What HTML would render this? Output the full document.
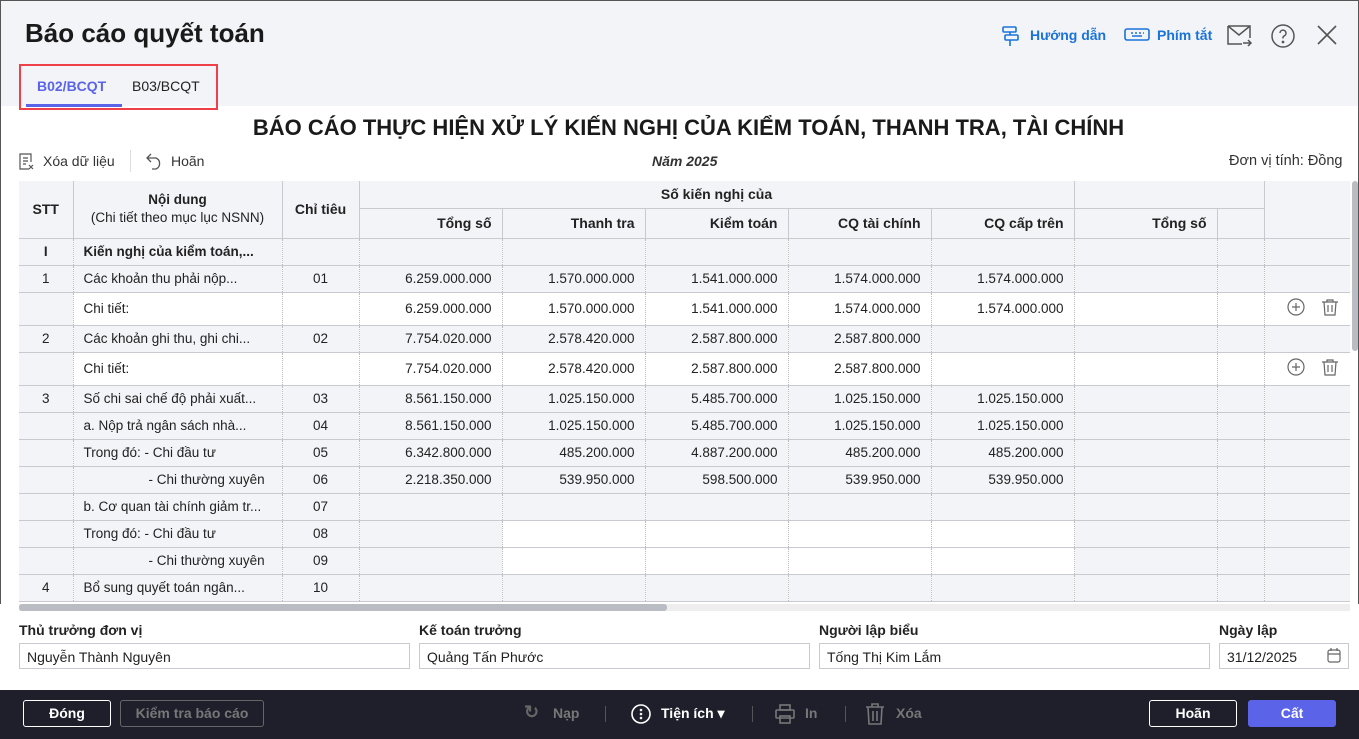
<!DOCTYPE html>
<html><head><meta charset="utf-8"><style>
*{box-sizing:border-box;margin:0;padding:0}
body{width:1359px;height:739px;overflow:hidden;font-family:"Liberation Sans",sans-serif;color:#222;background:#fff;position:relative}
.frame{position:absolute;inset:0;border:1px solid #555;border-bottom:none}
.top{position:absolute;left:1px;top:1px;right:1px;height:105px;background:#f3f4f8}
h1{position:absolute;left:25px;top:18px;font-size:26px;font-weight:bold;color:#1a1a1a}
.tabs{position:absolute;left:19px;top:64px;width:199px;height:46px;border:2px solid #ef4049}
.tab{position:absolute;top:12px;font-size:14px;font-weight:bold}
.tab1{left:16px;color:#5b63e8}.tab2{left:111px;color:#222;font-weight:normal}
.tabline{position:absolute;left:5px;top:38px;width:96px;height:3px;background:#5b63e8}
.tl{position:absolute;top:27px;font-size:14px;color:#1a73d9;font-weight:bold}
.rtitle{position:absolute;left:0;width:1377px;top:115px;text-align:center;font-size:22px;font-weight:bold;color:#1a1a1a}
.tool{position:absolute;top:153px;font-size:14px;color:#333}
table{position:absolute;left:19px;top:181px;border-collapse:collapse;table-layout:fixed;font-size:13.5px}
td,th{border-left:1px dotted #bbb;height:27px;padding:0 10px;white-space:nowrap;overflow:hidden;background:#f3f4f8;border-bottom:1px solid #c8cad0}
th{border-left:1px solid #c8cad0;font-weight:bold;font-size:14px}
td.r,th.r{text-align:right}td.c,th.c{text-align:center}
tr.w td{background:#fff;height:33px}
tr.w td:first-child{background:#f3f4f8}
td.wh{background:#fff}
.hs{position:absolute;left:19px;top:604px;width:1331px;height:7px;background:#eee}
.hs div{width:648px;height:7px;background:#b9bcc2;border-radius:3px}
.vs{position:absolute;left:1352px;top:181px;width:6px;height:170px;background:#b9bcc2;border-radius:3px}
.lbl{position:absolute;top:622px;font-size:14px;font-weight:bold}
.inp{position:absolute;top:643px;height:26px;border:1px solid #c8cad0;font-size:14px;padding:5px 7px}
.foot{position:absolute;left:0;top:690px;width:1359px;height:49px;background:#1e1f2b}
.btn{position:absolute;top:10px;height:27px;border:1px solid #fff;border-radius:3px;color:#fff;font-size:14px;font-weight:bold;text-align:center;line-height:25px}
.fi{position:absolute;top:15px;font-size:14px;font-weight:bold}
</style></head><body>
<div class="frame"></div>
<div class="top"></div>
<h1>Báo cáo quyết toán</h1>
<div class="tabs"><span class="tab tab1">B02/BCQT</span><span class="tab tab2">B03/BCQT</span><div class="tabline"></div></div>
<svg style="position:absolute;left:1001px;top:25px" width="20" height="22" viewBox="0 0 20 22" fill="none" stroke="#1a73d9" stroke-width="1.6"><rect x="2" y="2" width="13" height="5" rx="1"/><rect x="4" y="10" width="13" height="5" rx="1"/><path d="M9 7v3M9 15v6"/></svg>
<span class="tl" style="left:1030px">Hướng dẫn</span>
<svg style="position:absolute;left:1124px;top:28px" width="26" height="14" viewBox="0 0 26 14" fill="none" stroke="#1a73d9" stroke-width="1.6"><rect x="1" y="1" width="24" height="11" rx="2"/><path d="M7 5h2M11 5h2M15 5h2M19 5h1M8 8h10" /></svg>
<span class="tl" style="left:1157px">Phím tắt</span>
<svg style="position:absolute;left:1227px;top:24px" width="26" height="24" viewBox="0 0 26 24" fill="none" stroke="#555" stroke-width="1.5"><path d="M1 2h22v12M1 2v18h14M1 2l11 9 11-9M16 19h8M21 16l3 3-3 3"/></svg>
<svg style="position:absolute;left:1271px;top:24px" width="24" height="24" viewBox="0 0 24 24" fill="none" stroke="#555" stroke-width="1.5"><circle cx="12" cy="12" r="11"/><path d="M9 9a3 3 0 1 1 4 3c-1 .5-1 1-1 2.5"/><circle cx="12" cy="18" r=".6" fill="#555"/></svg>
<svg style="position:absolute;left:1317px;top:25px" width="20" height="20" viewBox="0 0 20 20" stroke="#555" stroke-width="1.6"><path d="M1 1l18 18M19 1L1 19"/></svg>
<div class="rtitle">BÁO CÁO THỰC HIỆN XỬ LÝ KIẾN NGHỊ CỦA KIỂM TOÁN, THANH TRA, TÀI CHÍNH</div>
<svg style="position:absolute;left:19px;top:153px" width="16" height="18" viewBox="0 0 16 18" fill="none" stroke="#555" stroke-width="1.2"><path d="M10 16H1V1h11v8M4 5h5M4 8h5M4 11h3M10 12l4 4M14 12l-4 4"/></svg>
<span class="tool" style="left:43px">Xóa dữ liệu</span>
<div style="position:absolute;left:130px;top:150px;width:1px;height:22px;background:#ddd"></div>
<svg style="position:absolute;left:146px;top:152px" width="18" height="18" viewBox="0 0 18 18" fill="none" stroke="#555" stroke-width="1.3"><path d="M5 2L1 6l4 4M1 6h9a6 6 0 0 1 0 11H6"/></svg>
<span class="tool" style="left:171px">Hoãn</span>
<span class="tool" style="left:652px;font-style:italic;font-weight:bold">Năm 2025</span>
<span class="tool" style="left:1229px;font-size:14.5px">Đơn vị tính: Đồng</span>
<table>
<colgroup><col style="width:54px"><col style="width:209px"><col style="width:77px"><col style="width:143px"><col style="width:143px"><col style="width:143px"><col style="width:143px"><col style="width:143px"><col style="width:143px"><col style="width:47px"><col style="width:86px"></colgroup>
<tr><th rowspan="2" class="c" style="border-left:none">STT</th><th rowspan="2" class="c" style="font-weight:normal;font-size:13.5px;line-height:18px"><b>Nội dung</b><br>(Chi tiết theo mục lục NSNN)</th><th rowspan="2" class="c">Chỉ tiêu</th><th colspan="5" class="c" style="height:26px">Số kiến nghị của</th><th colspan="2"></th><th rowspan="2"></th></tr>
<tr><th class="r" style="height:30px">Tổng số</th><th class="r">Thanh tra</th><th class="r">Kiểm toán</th><th class="r">CQ tài chính</th><th class="r">CQ cấp trên</th><th class="r">Tổng số</th><th></th></tr>
<tr><td class="c" style="border-left:none"><b>I</b></td><td><b>Kiến nghị của kiểm toán,...</b></td><td></td><td></td><td></td><td></td><td></td><td></td><td></td><td></td><td></td></tr>
<tr><td class="c" style="border-left:none">1</td><td>Các khoản thu phải nộp...</td><td class="c">01</td><td class="r">6.259.000.000</td><td class="r">1.570.000.000</td><td class="r">1.541.000.000</td><td class="r">1.574.000.000</td><td class="r">1.574.000.000</td><td></td><td></td><td></td></tr>
<tr class="w"><td style="border-left:none"></td><td>Chi tiết:</td><td></td><td class="r">6.259.000.000</td><td class="r">1.570.000.000</td><td class="r">1.541.000.000</td><td class="r">1.574.000.000</td><td class="r">1.574.000.000</td><td></td><td></td><td class="c" style="padding:0 0 0 12px"><svg width="58" height="20" viewBox="0 0 58 20" fill="none" stroke="#666" stroke-width="1.2"><circle cx="12" cy="10" r="8"/><path d="M12 6v8M8 10h8M38 5h16M43 5V3h6v2M40 5l1 13h10l1-13M44 8v7M48 8v7"/></svg></td></tr>
<tr><td class="c" style="border-left:none">2</td><td>Các khoản ghi thu, ghi chi...</td><td class="c">02</td><td class="r">7.754.020.000</td><td class="r">2.578.420.000</td><td class="r">2.587.800.000</td><td class="r">2.587.800.000</td><td></td><td></td><td></td><td></td></tr>
<tr class="w"><td style="border-left:none"></td><td>Chi tiết:</td><td></td><td class="r">7.754.020.000</td><td class="r">2.578.420.000</td><td class="r">2.587.800.000</td><td class="r">2.587.800.000</td><td></td><td></td><td></td><td class="c" style="padding:0 0 0 12px"><svg width="58" height="20" viewBox="0 0 58 20" fill="none" stroke="#666" stroke-width="1.2"><circle cx="12" cy="10" r="8"/><path d="M12 6v8M8 10h8M38 5h16M43 5V3h6v2M40 5l1 13h10l1-13M44 8v7M48 8v7"/></svg></td></tr>
<tr><td class="c" style="border-left:none">3</td><td>Số chi sai chế độ phải xuất...</td><td class="c">03</td><td class="r">8.561.150.000</td><td class="r">1.025.150.000</td><td class="r">5.485.700.000</td><td class="r">1.025.150.000</td><td class="r">1.025.150.000</td><td></td><td></td><td></td></tr>
<tr><td style="border-left:none"></td><td>a. Nộp trả ngân sách nhà...</td><td class="c">04</td><td class="r">8.561.150.000</td><td class="r">1.025.150.000</td><td class="r">5.485.700.000</td><td class="r">1.025.150.000</td><td class="r">1.025.150.000</td><td></td><td></td><td></td></tr>
<tr><td style="border-left:none"></td><td>Trong đó: - Chi đầu tư</td><td class="c">05</td><td class="r">6.342.800.000</td><td class="r">485.200.000</td><td class="r">4.887.200.000</td><td class="r">485.200.000</td><td class="r">485.200.000</td><td></td><td></td><td></td></tr>
<tr><td style="border-left:none"></td><td style="padding-left:75px">- Chi thường xuyên</td><td class="c">06</td><td class="r">2.218.350.000</td><td class="r">539.950.000</td><td class="r">598.500.000</td><td class="r">539.950.000</td><td class="r">539.950.000</td><td></td><td></td><td></td></tr>
<tr><td style="border-left:none"></td><td>b. Cơ quan tài chính giảm tr...</td><td class="c">07</td><td></td><td></td><td></td><td></td><td></td><td></td><td></td><td></td></tr>
<tr><td style="border-left:none"></td><td>Trong đó: - Chi đầu tư</td><td class="c">08</td><td></td><td class="wh"></td><td class="wh"></td><td class="wh"></td><td class="wh"></td><td></td><td></td><td></td></tr>
<tr><td style="border-left:none"></td><td style="padding-left:75px">- Chi thường xuyên</td><td class="c">09</td><td></td><td class="wh"></td><td class="wh"></td><td class="wh"></td><td class="wh"></td><td></td><td></td><td></td></tr>
<tr><td class="c" style="border-left:none">4</td><td>Bổ sung quyết toán ngân...</td><td class="c">10</td><td></td><td></td><td></td><td></td><td></td><td></td><td></td><td></td></tr>
</table>
<div style="position:absolute;left:0;top:604px;width:1359px;height:86px;background:#fff"></div>
<div class="hs"><div></div></div>
<div class="vs"></div>
<span class="lbl" style="left:19px">Thủ trưởng đơn vị</span>
<span class="lbl" style="left:419px">Kế toán trưởng</span>
<span class="lbl" style="left:819px">Người lập biểu</span>
<span class="lbl" style="left:1219px">Ngày lập</span>
<div class="inp" style="left:19px;width:391px">Nguyễn Thành Nguyên</div>
<div class="inp" style="left:419px;width:391px">Quảng Tấn Phước</div>
<div class="inp" style="left:819px;width:391px">Tống Thị Kim Lắm</div>
<div class="inp" style="left:1219px;width:130px">31/12/2025</div>
<svg style="position:absolute;left:1327px;top:647px" width="14" height="16" viewBox="0 0 14 16" fill="none" stroke="#666" stroke-width="1.2"><rect x="1" y="3" width="12" height="12" rx="2"/><path d="M1 7h12M4 1v3M10 1v3"/></svg>
<div class="foot">
<div class="btn" style="left:23px;width:88px">Đóng</div>
<div class="btn" style="left:120px;width:144px;border-color:#666;color:#777">Kiểm tra báo cáo</div>
<span class="fi" style="left:524px;color:#666;font-size:18px;top:12px">↻</span><span class="fi" style="left:553px;color:#777">Nạp</span>
<div style="position:absolute;left:605px;top:16px;width:1px;height:16px;background:#555"></div>
<svg style="position:absolute;left:631px;top:14px" width="20" height="20" viewBox="0 0 20 20" fill="none" stroke="#fff" stroke-width="1.6"><circle cx="10" cy="10" r="9"/><circle cx="10" cy="6" r=".5"/><circle cx="10" cy="10" r=".5"/><circle cx="10" cy="14" r=".5"/></svg>
<span class="fi" style="left:661px;color:#fff">Tiện ích ▾</span>
<div style="position:absolute;left:752px;top:16px;width:1px;height:16px;background:#555"></div>
<svg style="position:absolute;left:775px;top:14px" width="20" height="20" viewBox="0 0 20 20" fill="none" stroke="#777" stroke-width="1.6"><rect x="5" y="1" width="10" height="5"/><rect x="1" y="6" width="18" height="8" rx="1"/><rect x="5" y="12" width="10" height="7"/></svg>
<span class="fi" style="left:805px;color:#777">In</span>
<div style="position:absolute;left:845px;top:16px;width:1px;height:16px;background:#555"></div>
<svg style="position:absolute;left:865px;top:13px" width="20" height="22" viewBox="0 0 20 22" fill="none" stroke="#777" stroke-width="1.6"><path d="M1 4h18M7 4V1h6v3M3 4l1 17h12l1-17M8 8v10M12 8v10"/></svg>
<span class="fi" style="left:896px;color:#777">Xóa</span>
<div class="btn" style="left:1149px;width:88px">Hoãn</div>
<div class="btn" style="left:1248px;width:88px;background:#5b63e8;border-color:#5b63e8">Cất</div>
</div>
</body></html>
